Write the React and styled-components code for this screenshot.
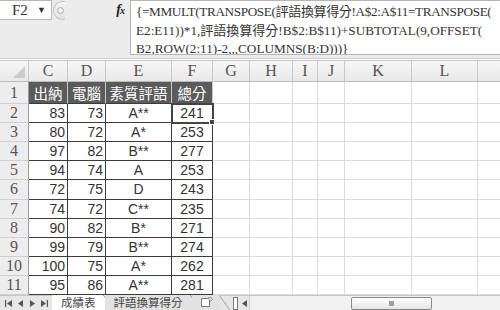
import React from "react";
import styled, { createGlobalStyle } from "styled-components";

const GlobalStyle = createGlobalStyle`
  html, body { margin: 0; padding: 0; background: #fff; overflow: hidden; }
`;

const Frame = styled.div`
  width: 500px;
  height: 310px;
  display: flex;
  flex-direction: column;
  background: #fff;
  overflow: hidden;
`;

const FormulaBar = styled.div`
  height: 58px;
  display: flex;
  background: #ececec;
  border-bottom: 1px solid #cfcfcf;
  flex-shrink: 0;
`;

const LeftPart = styled.div`
  width: 130px;
  display: flex;
  flex-direction: column;
`;

const NameRow = styled.div`
  height: 20px;
  display: flex;
  align-items: center;
`;

const NameBox = styled.div`
  width: 52px;
  height: 20px;
  box-sizing: border-box;
  background: #fff;
  border: 1px solid #b8b8b8;
  border-left: none;
  display: flex;
  align-items: center;
  justify-content: space-between;
  padding: 0 5px 0 12px;
  font-family: "Liberation Serif", serif;
  font-size: 15px;
  color: #333;
`;

const Caret = styled.span`
  font-size: 9px;
  color: #333;
`;

const Grip = styled.div`
  width: 12px;
  height: 19px;
  margin-left: 1px;
  border: 1px solid #c4c4c4;
  border-right: none;
  border-radius: 10px 0 0 10px;
  background: linear-gradient(#f6f6f6, #e2e2e2);
  display: flex;
  align-items: center;
  padding-left: 3px;
  box-sizing: border-box;

  &::before {
    content: "";
    width: 5px;
    height: 5px;
    border-radius: 50%;
    border: 1px solid #aaa;
    background: #eee;
  }
`;

const Fx = styled.span`
  margin-left: auto;
  margin-right: 6px;
  font-family: "Liberation Serif", serif;
  font-style: italic;
  font-weight: bold;
  font-size: 14px;
  color: #222;
  letter-spacing: -1px;

  small { font-size: 10px; }
`;

const FormulaBox = styled.div`
  flex: 1;
  height: 55px;
  box-sizing: border-box;
  background: #fff;
  border: 1px solid #b4b4b4;
  border-right: none;
  padding: 2px 0 0 5px;
  font-family: "Liberation Serif", "Noto Sans CJK TC", serif;
  font-size: 13.2px;
  color: #333;
  white-space: nowrap;
  overflow: hidden;
`;

const Line = styled.div`
  height: 18.5px;
  line-height: 18.5px;
  letter-spacing: ${(p) => p.$spacing || "0"};
`;

const Cjk = styled.span`
  font-family: "Noto Sans CJK TC", sans-serif;
  font-size: 13px;
  line-height: 1;
`;

const Sheet = styled.div`
  margin-top: 1px;
  display: grid;
  grid-template-columns: 29px 39px 38px 66px 41px 37px 43px 25px 27px 67px 66px 66px;
  grid-template-rows: 22px repeat(11, 1fr);
  height: 235px;
  width: 500px;
  overflow: hidden;
  flex-shrink: 0;
`;

const Head = styled.div`
  position: relative;
  box-sizing: border-box;
  background: linear-gradient(#f7f7f7, #e9e9e9);
  border-right: 1px solid #c9c9c9;
  border-bottom: 1px solid #b9b9b9;
  border-top: 1px solid #c9c9c9;
  display: flex;
  align-items: center;
  justify-content: center;
  font-family: "Liberation Serif", serif;
  font-size: 16px;
  color: #555;
`;

const Corner = styled(Head)`
  &::after {
    content: "";
    position: absolute;
    right: 3px;
    bottom: 3px;
    border-style: solid;
    border-width: 0 0 12px 12px;
    border-color: transparent transparent #cdcdcd transparent;
  }
`;

const RowHead = styled.div`
  box-sizing: border-box;
  background: #ededed;
  border-right: 1px solid #9c9c9c;
  border-bottom: 1px solid #cfcfcf;
  display: flex;
  align-items: center;
  justify-content: center;
  font-family: "Liberation Serif", serif;
  font-size: 16px;
  color: #555;
`;

const Cell = styled.div`
  position: relative;
  box-sizing: border-box;
  border-right: 1px solid ${(p) => (p.$data ? "#3c3c3c" : "#dcdcdc")};
  border-bottom: 1px solid ${(p) => (p.$data ? "#3c3c3c" : "#dcdcdc")};
  display: flex;
  align-items: center;
  justify-content: ${(p) => (p.$align === "right" ? "flex-end" : "center")};
  padding-right: ${(p) => (p.$align === "right" ? "2px" : "0")};
  font-family: "Liberation Sans", sans-serif;
  font-size: 14px;
  color: #333;
`;

const Label = styled.div`
  box-sizing: border-box;
  background: #5b5b5b;
  border-right: 1px solid #c8c8c8;
  border-bottom: 1px solid #3c3c3c;
  display: flex;
  align-items: center;
  justify-content: center;
  font-family: "Noto Sans CJK TC", sans-serif;
  font-size: 14.5px;
  color: #fff;
`;

const Selected = styled(Cell)`
  outline: 2px solid #444;
  outline-offset: -1px;
  z-index: 1;

  &::after {
    content: "";
    position: absolute;
    right: -3px;
    bottom: -3px;
    width: 4px;
    height: 4px;
    background: #444;
    border: 1px solid #fff;
  }
`;

const TabBar = styled.div`
  height: 15px;
  box-sizing: border-box;
  display: flex;
  align-items: stretch;
  background: #e7e7e7;
  border-top: 1px solid #c6c6c6;
  flex-shrink: 0;
`;

const Nav = styled.div`
  width: 52px;
  flex-shrink: 0;
  display: flex;
  align-items: center;
  gap: 5px;
  padding-left: 5px;
  box-sizing: border-box;
`;

const Tabs = styled.div`
  width: 178px;
  flex-shrink: 0;
  display: flex;
  align-items: stretch;
`;

const Tab = styled.div`
  position: relative;
  padding: 0 ${(p) => (p.$narrow ? "8px" : "9px")};
  display: flex;
  align-items: center;
  background: ${(p) => (p.$active ? "#fff" : "#e2e2e2")};
  font-family: "Noto Sans CJK TC", sans-serif;
  font-size: 11.5px;
  line-height: 1;
  color: #444;
  margin-top: -1px;

  &::after {
    content: "";
    position: absolute;
    right: -4px;
    top: 0;
    bottom: 0;
    width: 1px;
    background: #9a9a9a;
    transform: skewX(35deg);
  }
`;

const Scroll = styled.div`
  flex: 1;
  min-width: 0;
  display: flex;
  align-items: center;
  padding-left: 3px;
`;

const Splitter = styled.div`
  width: 3px;
  height: 11px;
  border: 1px solid #777;
  background: #fff;
  margin-right: 4px;
`;

const Track = styled.div`
  flex: 1;
  height: 14px;
  background: #f1f1f1;
  border-left: 1px solid #d4d4d4;
  display: flex;
  align-items: center;
  padding-left: 101px;
`;

const Thumb = styled.div`
  width: 81px;
  height: 13px;
  flex-shrink: 0;
  box-sizing: border-box;
  border: 1px solid #8a8a8a;
  border-radius: 2px;
  background: linear-gradient(#ffffff, #e4e4e4);
  display: flex;
  align-items: center;
  justify-content: center;

  &::before {
    content: "";
    width: 5px;
    height: 5px;
    background: #a0a0a0;
  }
`;

const NavIcon = ({ d }) => (
  <svg width="7" height="7" viewBox="0 0 7 7">
    <path d={d} fill="#555" />
  </svg>
);

const cols = ["C", "D", "E", "F", "G", "H", "I", "J", "K", "L", ""];
const labels = ["出納", "電腦", "素質評語", "總分"];
const data = [
  [83, 73, "A**", 241],
  [80, 72, "A*", 253],
  [97, 82, "B**", 277],
  [94, 74, "A", 253],
  [72, 75, "D", 243],
  [74, 72, "C**", 235],
  [90, 82, "B*", 271],
  [99, 79, "B**", 274],
  [100, 75, "A*", 262],
  [95, 86, "A**", 281],
];
const blanks = ["G", "H", "I", "J", "K", "L", "M"];

export default function App() {
  return (
    <Frame>
      <GlobalStyle />
      <FormulaBar>
        <LeftPart>
          <NameRow>
            <NameBox>
              F2 <Caret>▼</Caret>
            </NameBox>
            <Grip />
            <Fx>
              f<small>x</small>
            </Fx>
          </NameRow>
        </LeftPart>
        <FormulaBox>
          <Line $spacing="-0.35px">
            {"{=MMULT(TRANSPOSE("}<Cjk>評語換算得分</Cjk>!A$2:A$11=TRANSPOSE(
          </Line>
          <Line>
            E2:E11))*1,<Cjk>評語換算得分</Cjk>!B$2:B$11)+SUBTOTAL(9,OFFSET(
          </Line>
          <Line>{"B2,ROW(2:11)-2,,,COLUMNS(B:D)))}"}</Line>
        </FormulaBox>
      </FormulaBar>

      <Sheet>
        <Corner />
        {cols.map((c, i) => (
          <Head key={i}>{c}</Head>
        ))}

        <RowHead>1</RowHead>
        {labels.map((l) => (
          <Label key={l}>{l}</Label>
        ))}
        {blanks.map((c) => (
          <Cell key={c} />
        ))}

        {data.map((row, i) => (
          <React.Fragment key={i}>
            <RowHead>{i + 2}</RowHead>
            <Cell $data $align="right">{row[0]}</Cell>
            <Cell $data $align="right">{row[1]}</Cell>
            <Cell $data>{row[2]}</Cell>
            {i === 0 ? <Selected $data>{row[3]}</Selected> : <Cell $data>{row[3]}</Cell>}
            {blanks.map((c) => (
              <Cell key={c} />
            ))}
          </React.Fragment>
        ))}
      </Sheet>

      <TabBar>
        <Nav>
          <NavIcon d="M0 0h1.2v7H0zM7 0v7L2 3.5z" />
          <NavIcon d="M6 0v7L1 3.5z" />
          <NavIcon d="M1 0v7l5-3.5z" />
          <NavIcon d="M0 0v7l5-3.5zM5.8 0H7v7H5.8z" />
        </Nav>
        <Tabs>
          <Tab $active>成績表</Tab>
          <Tab>評語換算得分</Tab>
          <Tab $narrow>
            <svg width="13" height="11" viewBox="0 0 13 11">
              <path d="M1.5 1.5h8v8h-8z" fill="#fff" stroke="#777" />
              <path d="M8 1l3-1 1.5 2.5-2 2z" fill="#ddd" stroke="#888" strokeWidth="0.8" />
            </svg>
          </Tab>
        </Tabs>
        <Scroll>
          <Splitter />
          <NavIcon d="M5 0v7L0 3.5z" />
          <Track>
            <Thumb />
          </Track>
        </Scroll>
      </TabBar>
    </Frame>
  );
}
